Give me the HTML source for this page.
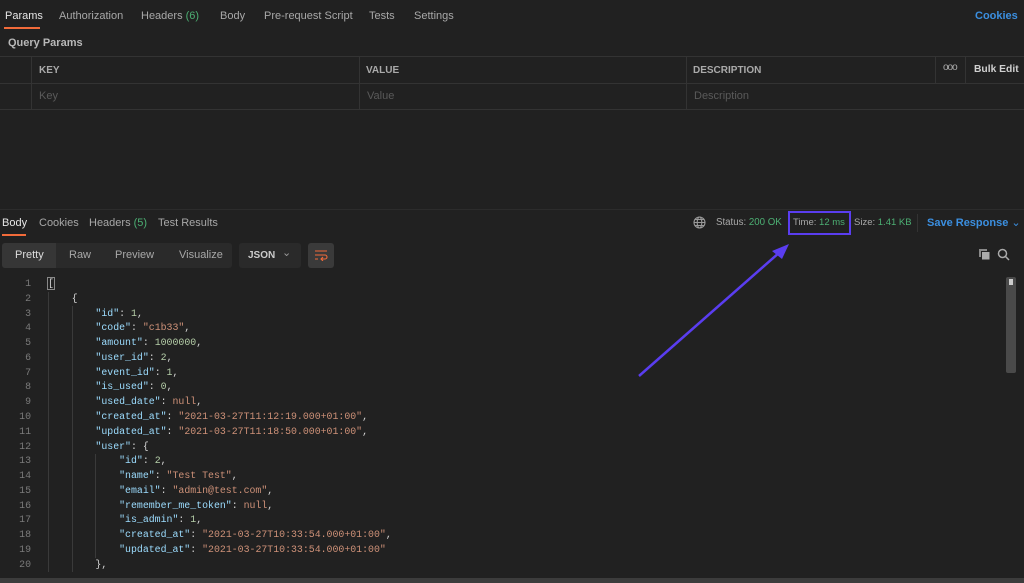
<!DOCTYPE html>
<html><head><style>
*{margin:0;padding:0;box-sizing:border-box}
body{width:1024px;height:583px;background:#212121;font-family:"Liberation Sans",sans-serif;color:#a8a8a8;position:relative;overflow:hidden;font-size:11px}
.a{position:absolute;white-space:nowrap}
.hl{position:absolute;height:1px;background:#333}
.vl{position:absolute;width:1px;background:#333}
.code{position:absolute;left:0;top:277px;font-family:"Liberation Mono",monospace;font-size:9.9px;line-height:14.78px}
.ln{position:absolute;left:0;width:31px;text-align:right;color:#7a7a7a}
.cl{position:absolute;left:48px;white-space:pre;color:#d4d4d4}
.k{color:#9cdcfe}.s{color:#ce9178}.n{color:#b5cea8}
</style></head><body>
<div class="a" style="left:5px;top:10px;color:#e6e6e6">Params</div>
<div class="a" style="left:4px;top:27px;width:36px;height:2px;background:#f26b3a"></div>
<div class="a" style="left:59px;top:10px">Authorization</div>
<div class="a" style="left:141px;top:10px">Headers <span style="color:#4caf73">(6)</span></div>
<div class="a" style="left:220px;top:10px">Body</div>
<div class="a" style="left:264px;top:10px">Pre-request Script</div>
<div class="a" style="left:369px;top:10px">Tests</div>
<div class="a" style="left:414px;top:10px">Settings</div>
<div class="a" style="left:975px;top:10px;color:#3b8fe0;font-weight:bold">Cookies</div>
<div class="a" style="left:8px;top:37px;font-weight:bold;color:#b8b8b8">Query Params</div>
<div class="hl" style="left:0;top:56px;width:1024px"></div>
<div class="hl" style="left:0;top:83px;width:1024px"></div>
<div class="hl" style="left:0;top:109px;width:1024px"></div>
<div class="vl" style="left:31px;top:56px;height:54px"></div>
<div class="vl" style="left:359px;top:56px;height:54px"></div>
<div class="vl" style="left:686px;top:56px;height:54px"></div>
<div class="vl" style="left:935px;top:56px;height:27px"></div>
<div class="vl" style="left:965px;top:56px;height:27px"></div>
<div class="a" style="left:39px;top:65px;font-weight:bold;font-size:10px;color:#aaa">KEY</div>
<div class="a" style="left:366px;top:65px;font-weight:bold;font-size:10px;color:#aaa">VALUE</div>
<div class="a" style="left:693px;top:65px;font-weight:bold;font-size:10px;color:#aaa">DESCRIPTION</div>
<div class="a" style="left:943px;top:62px;font-size:10px;color:#aaa;letter-spacing:-1px">ooo</div>
<div class="a" style="left:974px;top:64px;font-weight:bold;color:#d0d0d0;font-size:10.3px">Bulk Edit</div>
<div class="a" style="left:39px;top:90px;color:#5a5a5a">Key</div>
<div class="a" style="left:367px;top:90px;color:#5a5a5a">Value</div>
<div class="a" style="left:694px;top:90px;color:#5a5a5a">Description</div>
<div class="hl" style="left:0;top:209px;width:1024px;background:#2c2c2c"></div>
<div class="a" style="left:2px;top:217px;color:#e6e6e6">Body</div>
<div class="a" style="left:2px;top:234px;width:24px;height:2px;background:#f26b3a"></div>
<div class="a" style="left:39px;top:217px">Cookies</div>
<div class="a" style="left:89px;top:217px">Headers <span style="color:#4caf73">(5)</span></div>
<div class="a" style="left:158px;top:217px">Test Results</div>
<svg class="a" style="left:693px;top:216px" width="13" height="13" viewBox="0 0 13 13" fill="none" stroke="#999" stroke-width="1.1"><circle cx="6.5" cy="6.5" r="5.5"/><ellipse cx="6.5" cy="6.5" rx="2.3" ry="5.5"/><path d="M1 6.5h11M2 3.5h9M2 9.5h9"/></svg>
<div class="a" style="left:716px;top:217px;font-size:9.7px">Status: <span style="color:#4caf73">200 OK</span></div>
<div class="a" style="left:788px;top:211px;width:63px;height:24px;border:2px solid #5a3df0"></div>
<div class="a" style="left:793px;top:217px;font-size:9.5px">Time: <span style="color:#4caf73">12 ms</span></div>
<div class="a" style="left:854px;top:217px;font-size:9.5px">Size: <span style="color:#4caf73">1.41 KB</span></div>
<div class="vl" style="left:917px;top:214px;height:18px"></div>
<div class="a" style="left:927px;top:216px;color:#3b8fe0;font-weight:bold">Save Response <span style="font-weight:normal">&#8964;</span></div>
<div class="a" style="left:2px;top:243px;width:230px;height:25px;background:#2a2a2a;border-radius:3px"></div>
<div class="a" style="left:2px;top:243px;width:54px;height:25px;background:#363636;border-radius:3px 0 0 3px"></div>
<div class="a" style="left:15px;top:249px;color:#ddd">Pretty</div>
<div class="a" style="left:69px;top:249px">Raw</div>
<div class="a" style="left:115px;top:249px">Preview</div>
<div class="a" style="left:179px;top:249px">Visualize</div>
<div class="a" style="left:239px;top:243px;width:62px;height:25px;background:#2a2a2a;border-radius:3px"></div>
<div class="a" style="left:248px;top:250px;font-size:10px;font-weight:bold;color:#ccc">JSON</div>
<div class="a" style="left:282px;top:246px;color:#999">&#8964;</div>
<div class="a" style="left:308px;top:243px;width:26px;height:25px;background:#3a3a3a;border-radius:3px"></div>
<svg class="a" style="left:314px;top:249px" width="14" height="12" viewBox="0 0 14 12" fill="none" stroke="#f26b3a" stroke-width="1.1"><path d="M1 2h12M1 6h10a2 2 0 0 1 0 4H7M9 8l-2 2 2 2M1 10h3"/></svg>
<svg class="a" style="left:978px;top:248px" width="13" height="13" viewBox="0 0 13 13"><rect x="1" y="1" width="8" height="8" fill="#888"/><rect x="3.5" y="3.5" width="8.5" height="8.5" fill="#aaa" stroke="#212121"/></svg>
<svg class="a" style="left:997px;top:248px" width="13" height="13" viewBox="0 0 13 13" fill="none" stroke="#aaa" stroke-width="1.5"><circle cx="5.5" cy="5.5" r="4"/><path d="M8.5 8.5l3.5 3.5"/></svg>
<div class="a" style="left:1006px;top:277px;width:10px;height:96px;background:#4a4a4a;border-radius:2px"></div>
<div class="a" style="left:1009px;top:279px;width:4px;height:6px;background:#ccc"></div>
<div class="vl" style="left:48px;top:292px;height:280px;background:#3a3a3a"></div>
<div class="vl" style="left:72px;top:306px;height:266px;background:#3a3a3a"></div>
<div class="vl" style="left:95px;top:454px;height:104px;background:#3a3a3a"></div>
<div class="code">
<div class="ln" style="top:0">1</div><div class="cl" style="top:0"><span style="outline:1px solid #888">[</span></div>
<div class="ln" style="top:14.78px">2</div><div class="cl" style="top:14.78px">    {</div>
<div class="ln" style="top:29.56px">3</div><div class="cl" style="top:29.56px">        <span class="k">"id"</span>: <span class="n">1</span>,</div>
<div class="ln" style="top:44.34px">4</div><div class="cl" style="top:44.34px">        <span class="k">"code"</span>: <span class="s">"c1b33"</span>,</div>
<div class="ln" style="top:59.12px">5</div><div class="cl" style="top:59.12px">        <span class="k">"amount"</span>: <span class="n">1000000</span>,</div>
<div class="ln" style="top:73.9px">6</div><div class="cl" style="top:73.9px">        <span class="k">"user_id"</span>: <span class="n">2</span>,</div>
<div class="ln" style="top:88.68px">7</div><div class="cl" style="top:88.68px">        <span class="k">"event_id"</span>: <span class="n">1</span>,</div>
<div class="ln" style="top:103.46px">8</div><div class="cl" style="top:103.46px">        <span class="k">"is_used"</span>: <span class="n">0</span>,</div>
<div class="ln" style="top:118.24px">9</div><div class="cl" style="top:118.24px">        <span class="k">"used_date"</span>: <span class="s">null</span>,</div>
<div class="ln" style="top:133.02px">10</div><div class="cl" style="top:133.02px">        <span class="k">"created_at"</span>: <span class="s">"2021-03-27T11:12:19.000+01:00"</span>,</div>
<div class="ln" style="top:147.8px">11</div><div class="cl" style="top:147.8px">        <span class="k">"updated_at"</span>: <span class="s">"2021-03-27T11:18:50.000+01:00"</span>,</div>
<div class="ln" style="top:162.58px">12</div><div class="cl" style="top:162.58px">        <span class="k">"user"</span>: {</div>
<div class="ln" style="top:177.36px">13</div><div class="cl" style="top:177.36px">            <span class="k">"id"</span>: <span class="n">2</span>,</div>
<div class="ln" style="top:192.14px">14</div><div class="cl" style="top:192.14px">            <span class="k">"name"</span>: <span class="s">"Test Test"</span>,</div>
<div class="ln" style="top:206.92px">15</div><div class="cl" style="top:206.92px">            <span class="k">"email"</span>: <span class="s">"admin@test.com"</span>,</div>
<div class="ln" style="top:221.7px">16</div><div class="cl" style="top:221.7px">            <span class="k">"remember_me_token"</span>: <span class="s">null</span>,</div>
<div class="ln" style="top:236.48px">17</div><div class="cl" style="top:236.48px">            <span class="k">"is_admin"</span>: <span class="n">1</span>,</div>
<div class="ln" style="top:251.26px">18</div><div class="cl" style="top:251.26px">            <span class="k">"created_at"</span>: <span class="s">"2021-03-27T10:33:54.000+01:00"</span>,</div>
<div class="ln" style="top:266.04px">19</div><div class="cl" style="top:266.04px">            <span class="k">"updated_at"</span>: <span class="s">"2021-03-27T10:33:54.000+01:00"</span></div>
<div class="ln" style="top:280.82px">20</div><div class="cl" style="top:280.82px">        },</div>
</div>
<div class="a" style="left:0;top:578px;width:1024px;height:5px;background:#3c3c3c"></div>
<svg class="a" style="left:0;top:0" width="1024" height="583"><line x1="639" y1="376" x2="780" y2="252" stroke="#5a3df0" stroke-width="2.5"/><path d="M789 244 L772 251 L782 259 Z" fill="#5a3df0"/></svg>
</body></html>
